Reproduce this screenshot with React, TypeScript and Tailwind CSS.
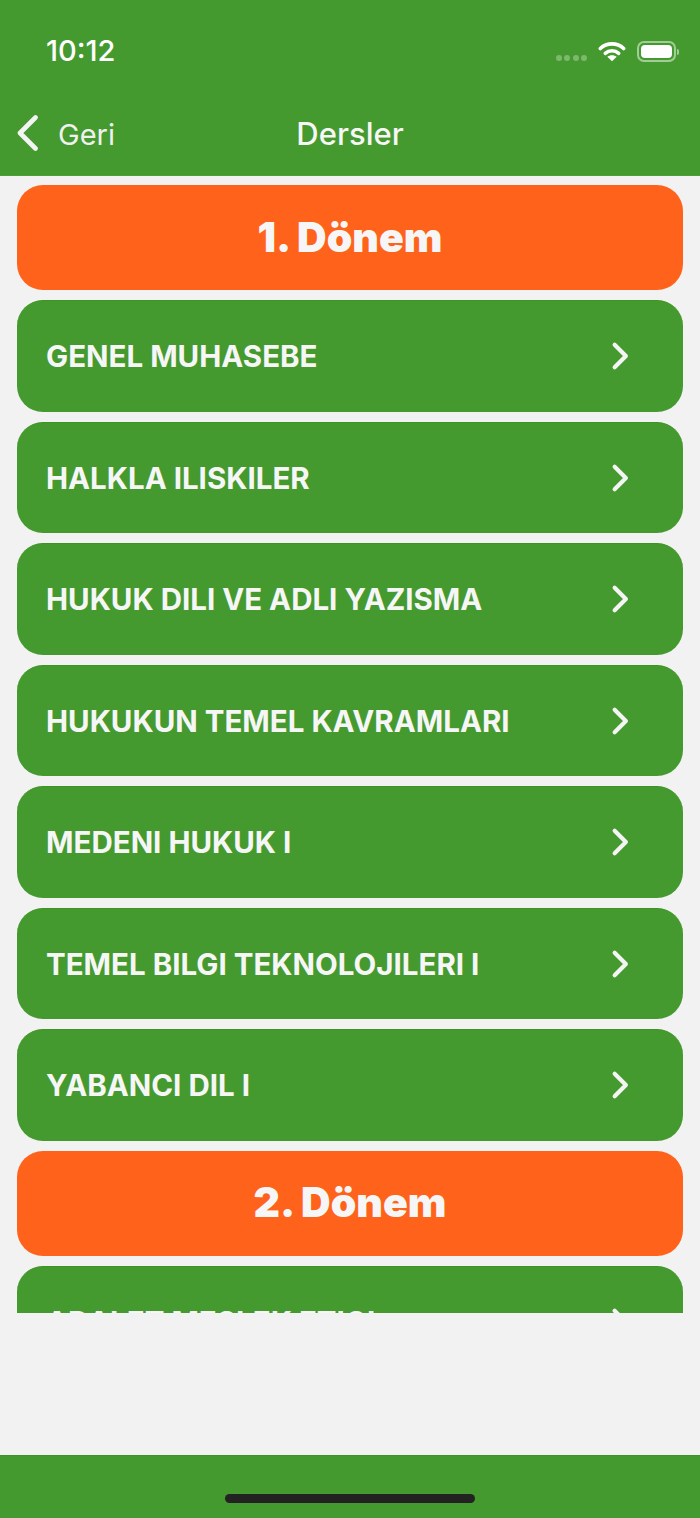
const dersler1 = [
  "GENEL MUHASEBE",
  "HALKLA ILISKILER",
  "HUKUK DILI VE ADLI YAZISMA",
  "HUKUKUN TEMEL KAVRAMLARI",
  "MEDENI HUKUK I",
  "TEMEL BILGI TEKNOLOJILERI I",
  "YABANCI DIL I",
];

function Chevron() {
  return (
    <svg width="20" height="30" viewBox="0 0 20 30" fill="none" className="mr-[53px] shrink-0">
      <path d="M3.5 2.5 L16 15 L3.5 27.5" stroke="#f4f4f4" strokeWidth="4.6" strokeLinecap="round" strokeLinejoin="round" transform="translate(1.5 1.5) scale(0.9)" />
    </svg>
  );
}

function Course({ name }: { name: string }) {
  return (
    <div className="h-[111.5px] shrink-0 rounded-[26px] bg-[#459a2f] flex items-center justify-between pl-[29px] border-t border-t-[#3d9422]">
      <span className="text-[29.5px] font-bold text-[#f6f6f6] whitespace-nowrap">{name}</span>
      <Chevron />
    </div>
  );
}

function Donem({ name }: { name: string }) {
  return (
    <div className="h-[105px] shrink-0 rounded-[26px] bg-[#ff631b] flex items-center justify-center">
      <span className="text-[41px] font-black text-[#f6f6f6]">{name}</span>
    </div>
  );
}

export default function App() {
  return (
    <div className="w-[700px] h-[1518px] bg-[#f2f2f2] flex flex-col overflow-hidden font-['Inter',sans-serif]">
      <header className="h-[175.5px] shrink-0 bg-[#459a2f] flex flex-col border-b border-b-[#4aa033]">
        <div className="h-[103px] flex items-start justify-between pl-[46px] pr-[21px] pt-[33px]">
          <span className="text-[29px] font-medium leading-[36px] text-white">10:12</span>
          <div className="flex items-center mt-[8px]">
            <div className="flex gap-[2.5px] mr-[11px] mt-[13px]">
              <span className="w-[6px] h-[6px] rounded-full bg-white/30" />
              <span className="w-[6px] h-[6px] rounded-full bg-white/30" />
              <span className="w-[6px] h-[6px] rounded-full bg-white/30" />
              <span className="w-[6px] h-[6px] rounded-full bg-white/30" />
            </div>
            <svg width="28" height="21" viewBox="0 0 30 22" fill="none" className="mr-[11px]">
              <path d="M2.5 7.8 C9.5 1.2 20.5 1.2 27.5 7.8" stroke="#fff" strokeWidth="3.8" strokeLinecap="round" />
              <path d="M7.8 13 C11.8 9.4 18.2 9.4 22.2 13" stroke="#fff" strokeWidth="3.8" strokeLinecap="round" />
              <path d="M15 21.5 L10 16.6 C13 14.4 17 14.4 20 16.6 Z" fill="#fff" />
            </svg>
            <div className="w-[39px] h-[21px] rounded-[7px] border-2 border-white/50 p-[2px]">
              <div className="w-full h-full rounded-[4px] bg-white" />
            </div>
            <span className="w-[2px] h-[6px] ml-[1px] rounded-r-full bg-white/50" />
          </div>
        </div>
        <div className="relative flex-1 flex items-center pl-[17px] pb-[11px]">
          <svg width="22" height="36" viewBox="0 0 22 36" fill="none">
            <path d="M18.5 2.5 L3 18 L18.5 33.5" stroke="#f4f4f4" strokeWidth="4.6" strokeLinecap="round" strokeLinejoin="round" />
          </svg>
          <span className="ml-[19px] mt-[2px] text-[29px] text-[#f0f0f0]">Geri</span>
          <span className="absolute left-0 right-0 top-[11px] text-center text-[31px] font-medium leading-[40px] text-[#f6f6f6]">Dersler</span>
        </div>
      </header>

      <main className="h-[1137.5px] shrink-0 overflow-hidden pt-[9.5px] px-[17px] flex flex-col gap-[10px]">
        <Donem name="1. Dönem" />
        {dersler1.map((d) => (
          <Course key={d} name={d} />
        ))}
        <Donem name="2. Dönem" />
        <Course name="ADALET MESLEK ETIGI" />
      </main>

      <div className="flex-1" />

      <footer className="h-[63.5px] shrink-0 bg-[#459a2f] border-t border-t-[#3d9422] flex justify-center pt-[38px]">
        <div className="w-[250px] h-[9px] rounded-full bg-[#222222]" />
      </footer>
    </div>
  );
}
